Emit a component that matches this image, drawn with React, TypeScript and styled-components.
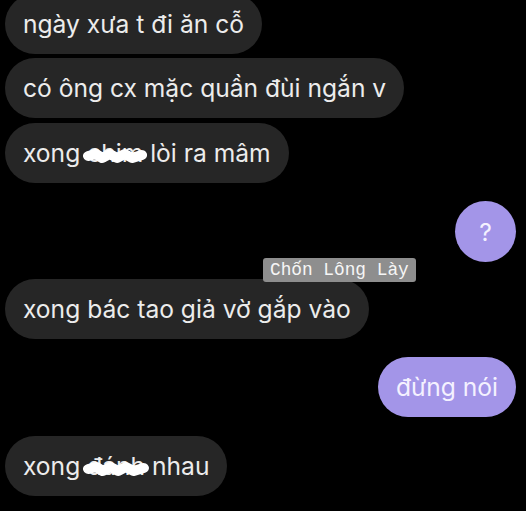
import React from "react"
import styled, { createGlobalStyle } from "styled-components"

const GlobalStyle = createGlobalStyle`
    html, body {
        margin: 0;
        padding: 0;
        background: #000;
        overflow: hidden;
    }
`

const Screen = styled.div`
    position: relative;
    width: 526px;
    height: 511px;
    background: #000;
    overflow: hidden;
    font-family: "Inter", "Noto Sans", sans-serif;
`

const Thread = styled.div`
    display: flex;
    flex-direction: column;
    padding: 0 10px 0 5px;
    margin-top: -6px;
`

const Row = styled.div<{ $mine?: boolean; $gap: number }>`
    display: flex;
    justify-content: ${(p) => (p.$mine ? "flex-end" : "flex-start")};
    margin-top: ${(p) => p.$gap}px;
`

const Bubble = styled.div<{ $mine?: boolean; $round?: boolean }>`
    box-sizing: border-box;
    display: flex;
    align-items: center;
    justify-content: center;
    padding: ${(p) => (p.$round ? "0" : "0 18px")};
    width: ${(p) => (p.$round ? "61px" : "auto")};
    height: ${(p) => (p.$round ? "61px" : "60px")};
    border-radius: 31px;
    background: ${(p) => (p.$mine ? "#a395e8" : "#262626")};
    color: ${(p) => (p.$mine ? "#f4f1ff" : "#ececec")};
    font-size: 24.6px;
    white-space: nowrap;
`

const Hidden = styled.span`
    position: relative;
    display: inline-block;
`

const Scribble = styled.svg`
    position: absolute;
    left: -4px;
    top: 10px;
    width: calc(100% + 8px);
    height: 16px;
`

const Watermark = styled.div`
    position: absolute;
    left: 263px;
    top: 258px;
    height: 24px;
    padding: 0 7px;
    display: flex;
    align-items: center;
    background: #8e8e8e;
    border-radius: 3px;
    color: #f6f6f6;
    font-family: "Liberation Mono", "DejaVu Sans Mono", monospace;
    font-size: 17.8px;
`

const Censored: React.FC<{ word: string }> = ({ word }) => (
    <Hidden>
        {word}
        <Scribble viewBox="0 0 60 16" preserveAspectRatio="none">
            <path
                d="M5 8 L12 6 L18 10 L25 6 L32 10 L39 6 L46 10 L55 7"
                stroke="#fff"
                strokeWidth="10"
                strokeLinecap="round"
                strokeLinejoin="round"
                fill="none"
            />
        </Scribble>
    </Hidden>
)

export default function App() {
    return (
        <Screen>
            <GlobalStyle />
            <Thread>
                <Row $gap={0}>
                    <Bubble>ngày xưa t đi ăn cỗ</Bubble>
                </Row>
                <Row $gap={4}>
                    <Bubble>có ông cx mặc quần đùi ngắn v</Bubble>
                </Row>
                <Row $gap={5}>
                    <Bubble>
                        xong&nbsp;<Censored word="chim" />&nbsp;lòi ra mâm
                    </Bubble>
                </Row>
                <Row $mine $gap={18}>
                    <Bubble $mine $round>?</Bubble>
                </Row>
                <Row $gap={17}>
                    <Bubble>xong bác tao giả vờ gắp vào</Bubble>
                </Row>
                <Row $mine $gap={18}>
                    <Bubble $mine>đừng nói</Bubble>
                </Row>
                <Row $gap={19}>
                    <Bubble>
                        xong&nbsp;<Censored word="đánh" />&nbsp;nhau
                    </Bubble>
                </Row>
            </Thread>
            <Watermark>Chốn Lông Lày</Watermark>
        </Screen>
    )
}
